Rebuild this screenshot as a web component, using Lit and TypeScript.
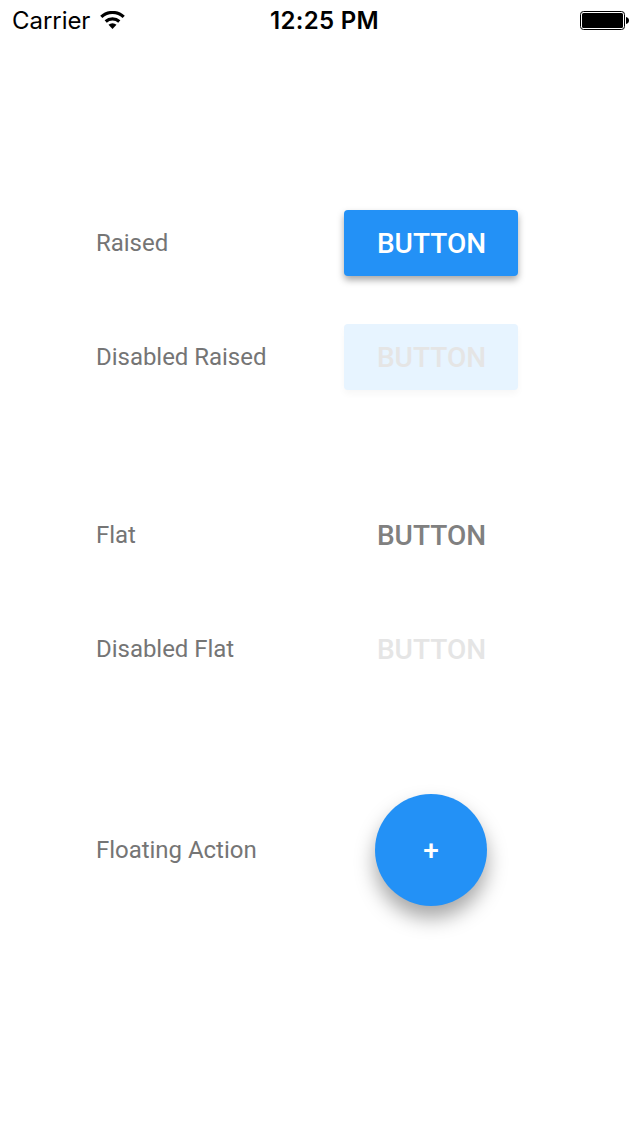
import { LitElement, html, css } from "lit";
import { customElement } from "lit/decorators.js";

@customElement("app-root")
export class AppRoot extends LitElement {
  static styles = css`
    :host { display: flex; flex-direction: column; box-sizing: border-box; width: 640px; height: 1136px; background: #fff; font-family: Roboto, "Noto Sans", sans-serif; }
    .status { display: grid; grid-template-columns: 1fr auto 1fr; align-items: center; height: 40px; padding: 0 11px 0 12px; font: 24px/40px Inter, sans-serif; color: #000; }
    .carrier { display: flex; align-items: center; letter-spacing: -0.05px; }
    .carrier span, .time { padding-top: 2px; line-height: 38px; }
    .carrier svg { margin-left: 10px; }
    .time { font-weight: 600; letter-spacing: 0.3px; padding-left: 8px; }
    .battery { justify-self: end; }
    svg { display: block; }
    .rows { display: flex; flex-direction: column; padding: 170px 122px 0 96px; }
    .row { display: flex; align-items: center; justify-content: space-between; height: 66px; margin-bottom: 48px; }
    .row.last { margin-bottom: 112px; }
    .row.fab-row { height: 112px; margin: 0; }
    .label { font-size: 24px; line-height: 28px; letter-spacing: -0.03px; color: #757575; }
    button { box-sizing: border-box; width: 174px; height: 66px; padding: 2px 0 0 1px; border: 0; border-radius: 4px; background: none; font: 500 28px/64px Roboto, sans-serif; color: #808080; }
    .raised { background: #2391f6; color: #fff; box-shadow: 0 4px 7px rgba(0, 0, 0, 0.35); }
    .off { color: #e5e5e5; }
    .raised.off { background: #e7f4ff; color: #e5e5e5; box-shadow: 0 4px 7px rgba(0, 0, 0, 0.035); }
    .fab { width: 112px; height: 112px; padding-left: 0; margin-right: 31px; border-radius: 50%; background: #2391f6; color: #fff; line-height: 110px; box-shadow: 0 12px 20px rgba(0, 0, 0, 0.35); }
  `;

  render() {
    return html`
      <div class="status">
        <div class="carrier"><span>Carrier</span>
          <svg width="25" height="18" viewBox="0 0 25 18"><path d="M1.300 5.900a16.300 16.300 0 0 1 22.400 0M5.700 10.500a10.200 10.200 0 0 1 13.600 0" fill="none" stroke="#000" stroke-width="3.200"/><path d="M8.500 13.700a5.900 5.900 0 0 1 8 0L12.500 18z"/></svg>
        </div>
        <div class="time">12:25 PM</div>
        <svg class="battery" width="49" height="19" viewBox="0 0 49 19"><rect x=".5" y=".5" width="44" height="18" rx="3" fill="none" stroke="#000"/><rect x="2" y="2" width="41" height="15" rx="1.500"/><path d="M46 6c4 .5 4 6.500 0 7z"/></svg>
      </div>
      <div class="rows">
        <div class="row"><span class="label">Raised</span><button class="raised">BUTTON</button></div>
        <div class="row last"><span class="label">Disabled Raised</span><button class="raised off">BUTTON</button></div>
        <div class="row"><span class="label">Flat</span><button>BUTTON</button></div>
        <div class="row last"><span class="label">Disabled Flat</span><button class="off">BUTTON</button></div>
        <div class="row fab-row"><span class="label">Floating Action</span><button class="fab">+</button></div>
      </div>
    `;
  }
}
